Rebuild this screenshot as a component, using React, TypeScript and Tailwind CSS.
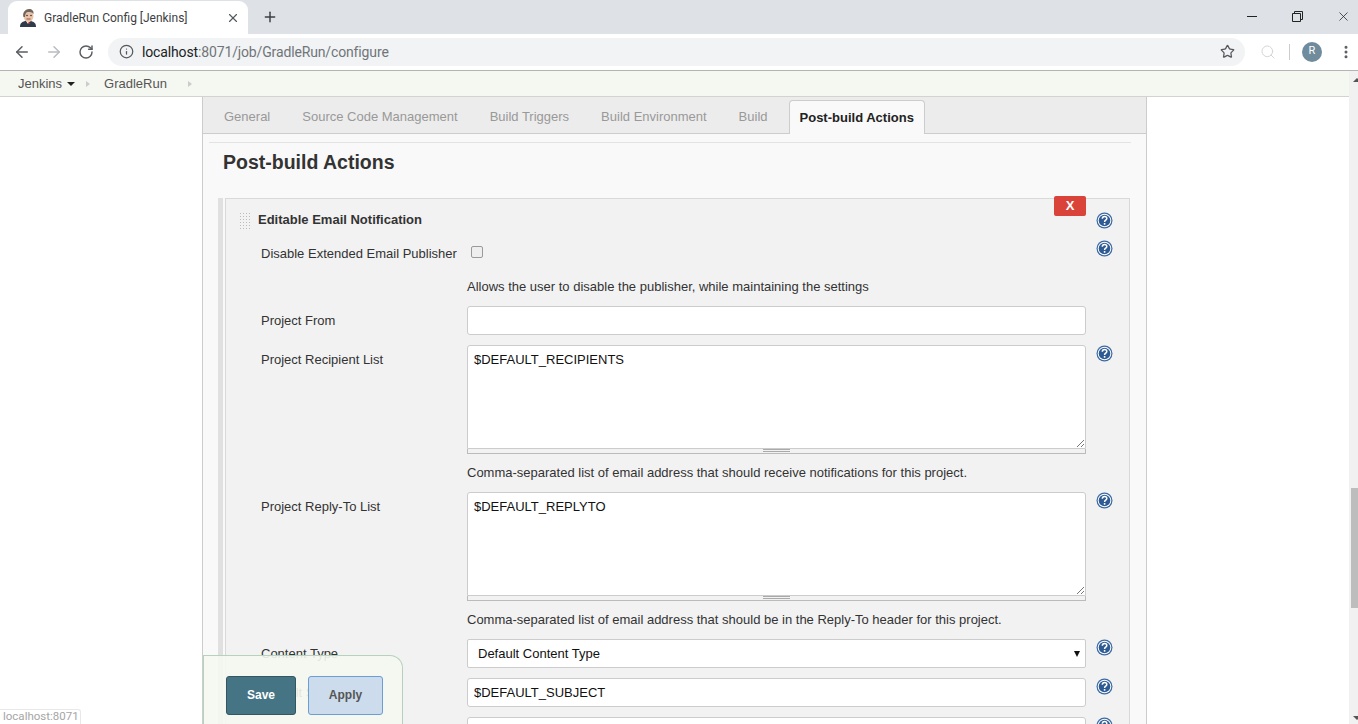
import { ArrowLeft, ArrowRight, Info, MoreVertical, Plus, RotateCw, Search, Star, X } from "lucide-react";

const FONT = "font-['Liberation_Sans',Arial,sans-serif]";
const TABS = ["General", "Source Code Management", "Build Triggers", "Build Environment", "Build"];

function JenkinsFavicon() {
  return (
    <svg width="16" height="18" viewBox="0 0 16 18" aria-hidden>
      <path d="M0 18c0-4 2-5 5-6h6c3 1 5 2 5 6z" fill="#2f3a4a" />
      <path d="M6 12l2 3 2-3z" fill="#f3f3f3" />
      <path d="M7 15h3l-1-2z" fill="#c0392b" />
      <ellipse cx="8.5" cy="7" rx="5" ry="6" fill="#eac2a8" />
      <path d="M3.5 8C2 3 6 0 9 0s5 2 4.5 5C12 3 10 3 8 3 6 3 5 5 5 8z" fill="#6f655c" />
      <circle cx="7" cy="6.5" r=".8" fill="#333" />
      <circle cx="11" cy="6.5" r=".8" fill="#333" />
      <path d="M6.500 10h4" stroke="#8a5a48" strokeWidth="1" />
    </svg>
  );
}

function Help() {
  return (
    <svg width="17" height="17" viewBox="0 0 17 17" className="block" aria-hidden>
      <circle cx="8.500" cy="8.500" r="8" fill="#3b6aa3" />
      <circle cx="8.500" cy="8.500" r="6.800" fill="#fff" />
      <circle cx="8.500" cy="8.500" r="5.800" fill="#2f5b93" />
      <path d="M6.300 6.800c0-1.500 1-2.300 2.300-2.300s2.200.8 2.200 2c0 1.700-2.200 1.700-2.200 3.400" fill="none" stroke="#fff" strokeWidth="1.500" />
      <rect x="7.800" y="11" width="1.600" height="1.700" fill="#fff" />
    </svg>
  );
}

function HelpSlot({ top }: { top: number }) {
  return (
    <div className="ml-[10px] w-[17px] shrink-0" style={{ paddingTop: top }}>
      <Help />
    </div>
  );
}

function Note({ text, mt }: { text: string; mt: number }) {
  return (
    <div className="flex" style={{ marginTop: mt }}>
      <div className="w-[206px] shrink-0" />
      <div className="h-4 text-[13px] leading-[17px] text-[#333]">{text}</div>
    </div>
  );
}

function TextRow({ label, value, mt, help }: { label: string; value: string; mt: number; help: number }) {
  return (
    <div className="flex" style={{ marginTop: mt }}>
      <div className="w-[206px] shrink-0 pt-[6px] text-[13px] leading-[17px] text-[#333]">{label}</div>
      <div className="flex h-[29px] w-[619px] shrink-0 items-center rounded-[3px] border border-[#ccc] bg-white pl-[6px] text-[13px] text-[#111]">
        {value}
      </div>
      {help >= 0 && <HelpSlot top={help} />}
    </div>
  );
}

function AreaRow({ label, value, mt }: { label: string; value: string; mt: number }) {
  return (
    <div className="flex" style={{ marginTop: mt }}>
      <div className="w-[206px] shrink-0 pt-[6px] text-[13px] leading-[17px] text-[#333]">{label}</div>
      <div className="w-[619px] shrink-0">
        <div className="relative h-[104px] rounded-t-[3px] border border-[#ccc] bg-white px-[6px] pt-[6px] text-[13px] leading-4 text-[#111]">
          {value}
          <svg width="10" height="10" viewBox="0 0 10 10" className="absolute bottom-0 right-0" aria-hidden>
            <path d="M2 9l7-7M6 9l3-3" stroke="#777" strokeWidth="1" />
          </svg>
        </div>
        <div className="flex h-[5px] justify-center border-x border-b border-[#bbb] bg-[#f2f2f2]">
          <div className="h-[3px] w-[27px] border-y border-[#aaa]" />
        </div>
      </div>
      <HelpSlot top={0} />
    </div>
  );
}

export default function App() {
  return (
    <div className={`${FONT} relative flex h-[724px] w-[1358px] flex-col overflow-hidden bg-white`}>
      {/* browser tab strip */}
      <div className="flex h-[34px] shrink-0 bg-[#dee1e6]">
        <div className="ml-2 mt-[1px] flex h-[33px] w-[240px] items-center rounded-t-[9px] bg-white pl-3 pr-2">
          <JenkinsFavicon />
          <span className="ml-[8px] flex-1 font-['Roboto',sans-serif] text-[12px] text-[#3c4043]">GradleRun Config [Jenkins]</span>
          <X size={14} strokeWidth={2} className="text-[#55585c]" />
        </div>
        <div className="ml-[14px] flex h-[34px] items-center">
          <Plus size={16} strokeWidth={2.2} className="text-[#3c4043]" />
        </div>
        <div className="ml-auto flex h-[32px] text-[#222]">
          <div className="flex w-[46px] items-center justify-center">
            <div className="h-[1px] w-[10px] bg-[#222]" />
          </div>
          <div className="flex w-[45px] items-center justify-center">
            <svg width="11" height="11" viewBox="0 0 11 11" aria-hidden>
              <path d="M.5 2.500h8v8h-8zM2.500 2.500v-2h8v8h-2" fill="none" stroke="#222" />
            </svg>
          </div>
          <div className="flex w-[38px] items-center justify-center pl-[8px]">
            <X size={15} strokeWidth={1.2} />
          </div>
        </div>
      </div>

      {/* address bar */}
      <div className="flex h-[37px] shrink-0 items-center border-b border-[#b4b4b4] bg-white pb-[1px]">
        <ArrowLeft size={18} strokeWidth={2} className="ml-[13px] text-[#5a5d61]" />
        <ArrowRight size={18} strokeWidth={2} className="ml-[14px] text-[#b9bcc0]" />
        <RotateCw size={16} strokeWidth={2.2} className="ml-[15px] text-[#5a5d61]" />
        <div className="ml-[14px] flex h-[28px] w-[1137px] items-center rounded-full bg-[#f1f3f4] pl-[11px] pr-[10px]">
          <Info size={15} strokeWidth={2} className="text-[#55585c]" />
          <span className="ml-[8px] flex-1 pt-[1px] font-['Roboto',sans-serif] text-[14px] tracking-[-0.01em] text-[#70757a]">
            <span className="text-[#202124]">localhost</span>:8071/job/GradleRun/configure
          </span>
          <Star size={15} strokeWidth={2} className="text-[#55585c]" />
        </div>
        <Search size={16} strokeWidth={1.500} className="ml-[15px] text-[#d5d5d5]" />
        <div className="ml-[13px] h-[16px] w-[1px] bg-[#ccc]" />
        <div className="ml-[12px] flex h-[20px] w-[20px] items-center justify-center rounded-full bg-[#6f8b9c] font-['Roboto',sans-serif] text-[11px] text-white">
          R
        </div>
        <MoreVertical size={16} strokeWidth={2.500} className="ml-[16px] text-[#5a5d61]" />
      </div>

      <div className="flex min-h-0 flex-1">
        <div className="flex min-w-0 flex-1 flex-col">
          {/* breadcrumb */}
          <div className="flex h-[26px] shrink-0 items-center border-b border-[#d3d3cf] bg-[#f5f8f1] pl-[18px] text-[13px] text-[#555]">
            <span>Jenkins</span>
            <span className="ml-[5px] h-0 w-0 border-x-[4px] border-t-[4px] border-x-transparent border-t-[#222]" />
            <span className="ml-[11px] h-0 w-0 border-y-[3px] border-l-[4px] border-y-transparent border-l-[#ccc]" />
            <span className="ml-[14px]">GradleRun</span>
            <span className="ml-[21px] h-0 w-0 border-y-[3px] border-l-[4px] border-y-transparent border-l-[#ccc]" />
          </div>

          <div className="flex min-h-0 flex-1 bg-white">
            <div className="w-[202px] shrink-0" />

            {/* config panel */}
            <div className="w-[945px] shrink-0 border-x border-[#ccc] bg-[#f9f9f9]">
              <div className="flex h-[37px] items-end border-b border-[#ccc] bg-[#ececec] pl-[5px] text-[13px] text-[#999]">
                {TABS.map((t) => (
                  <div key={t} className="flex h-[33px] items-center px-[16px]">
                    {t}
                  </div>
                ))}
                <div className="-mb-px ml-[5px] flex h-[34px] items-center rounded-t-[4px] border border-b-0 border-[#ccc] bg-[#f9f9f9] px-[10px] font-bold text-[#222]">
                  Post-build Actions
                </div>
              </div>
              <div className="ml-[6px] mr-[15px] mt-[8px] border-t border-[#e3e3e3] pl-[14px] pt-[6px] text-[19.5px] font-bold leading-[26px] text-[#333]">
                Post-build Actions
              </div>

              <div className="ml-[15px] mr-[17px] mt-[23px] flex">
                <div className="h-[600px] w-[5px] shrink-0 bg-[#e0e0e0]" />
                <div className="ml-[2px] h-[600px] w-[905px] shrink-0 border border-[#d9d9d9] bg-[#f2f2f2] pl-[35px]">
                  <div className="relative flex h-[37px]">
                    <div className="absolute -left-[22px] top-[13px] h-[18px] w-[12px] bg-[radial-gradient(#bbb_1px,transparent_1px)] bg-[length:3px_3px]" />
                    <div className="-ml-[3px] pt-[13px] text-[13px] font-bold leading-4 text-[#333]">Editable Email Notification</div>
                    <div className="absolute left-[793px] -top-[3px] flex h-[20px] w-[32px] items-center justify-center rounded-[2px] bg-[#d9433a] text-[13px] font-bold text-white">
                      X
                    </div>
                    <div className="absolute left-[835px] top-[13px]">
                      <Help />
                    </div>
                  </div>

                  <div className="flex h-[27px]">
                    <div className="w-[210px] shrink-0 pt-[9px] text-[13px] leading-[17px] text-[#333]">Disable Extended Email Publisher</div>
                    <div className="mt-[10px] h-[12px] w-[12px] rounded-[2px] border border-[#9a9a9a] bg-[#eee]" />
                    <div className="ml-[613px] pt-[4px]">
                      <Help />
                    </div>
                  </div>

                  <Note text="Allows the user to disable the publisher, while maintaining the settings" mt={15} />
                  <TextRow label="Project From" value="" mt={12} help={-1} />
                  <AreaRow label="Project Recipient List" value="$DEFAULT_RECIPIENTS" mt={10} />
                  <Note text="Comma-separated list of email address that should receive notifications for this project." mt={10} />
                  <AreaRow label="Project Reply-To List" value="$DEFAULT_REPLYTO" mt={12} />
                  <Note text="Comma-separated list of email address that should be in the Reply-To header for this project." mt={10} />

                  <div className="mt-[12px] flex">
                    <div className="w-[206px] shrink-0 pt-[6px] text-[13px] leading-[17px] text-[#333]">Content Type</div>
                    <div className="flex h-[29px] w-[619px] shrink-0 items-center justify-between rounded-[2px] border border-[#ccc] bg-white pl-[10px] pr-[5px] text-[13px] text-[#111]">
                      Default Content Type
                      <span className="h-0 w-0 border-x-[3.5px] border-t-[6px] border-x-transparent border-t-[#111]" />
                    </div>
                    <HelpSlot top={0} />
                  </div>
                  <TextRow label="Default Subject" value="$DEFAULT_SUBJECT" mt={10} help={0} />
                  <TextRow label="" value="" mt={10} help={0} />
                </div>
              </div>
            </div>
          </div>
        </div>

        {/* page scrollbar */}
        <div className="relative w-[9px] shrink-0 overflow-hidden bg-[#f1f1f1]">
          <div className="absolute left-[4px] top-[7px] h-0 w-0 border-x-[4px] border-b-[4px] border-x-transparent border-b-[#555]" />
          <div className="ml-[2px] mt-[417px] h-[120px] w-[7px] bg-[#bdbdbd]" />
          <div className="absolute bottom-[4px] left-[4px] h-0 w-0 border-x-[4px] border-t-[4px] border-x-transparent border-t-[#555]" />
        </div>
      </div>

      {/* sticky save bar */}
      <div className="absolute bottom-0 left-[203px] flex h-[69px] w-[200px] items-start rounded-tr-[13px] border-x border-t border-[#b5d2bd] bg-[#f5f8f1]/90 pl-[22px] pt-[20px]">
        <div className="flex h-[39px] w-[70px] items-center justify-center rounded-[3px] border border-[#35565f] bg-[#457585] pb-[2px] text-[12px] font-bold text-white">
          Save
        </div>
        <div className="ml-[12px] flex h-[39px] w-[75px] items-center justify-center rounded-[3px] border border-[#6a9ed4] bg-[#ccdcec] pb-[2px] text-[12px] font-bold text-[#555]">
          Apply
        </div>
      </div>

      {/* link status */}
      <div className="absolute bottom-0 left-0 flex h-[15px] w-[81px] items-center rounded-tr-[3px] border-r border-t border-[#e8e8e8] bg-white pl-[3px] font-['Roboto',sans-serif] text-[11.500px] text-[#a5a5a5]">
        localhost:8071
      </div>
    </div>
  );
}
